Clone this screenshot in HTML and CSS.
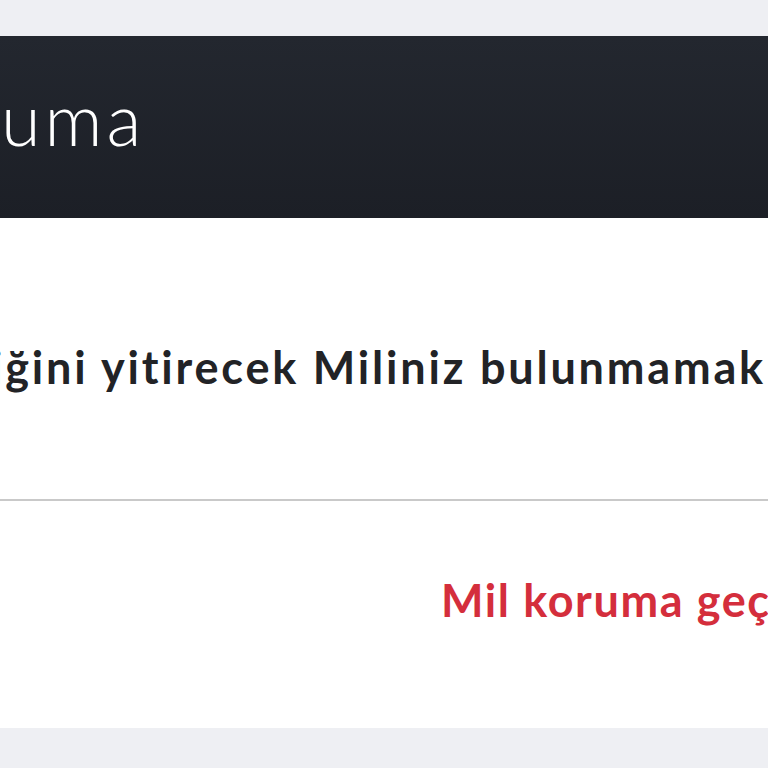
FILE: index.html
```html
<!DOCTYPE html>
<html lang="tr">
<head>
  <meta charset="UTF-8">
  <meta name="viewport" content="width=device-width, initial-scale=1.0">
  <title>Mil koruma</title>
  <link rel="stylesheet" href="styles.css">
</head>
<body>
  <div class="modal">
    <div class="modal-header">uma</div>
    <div class="modal-body">
      <p class="message">iğini yitirecek Miliniz bulunmamak</p>
    </div>
    <div class="modal-footer">
      <a class="action-link" href="#">Mil koruma geç</a>
    </div>
  </div>
</body>
</html>
```

FILE: styles.css
```css
body {
  margin: 0;
  padding: 0;
  background-color: #eeeff3;
  font-family: Lato, "Open Sans", Arial, sans-serif;
  overflow: hidden;
}

.modal {
  margin-top: 36px;
  height: 692px;
  background-color: white;
  overflow: hidden;
  white-space: nowrap;
}

.modal-header {
  height: 182px;
  box-sizing: border-box;
  padding-top: 46px;
  padding-left: 1px;
  background: linear-gradient(#23272f, #1c1f26);
  color: white;
  font-size: 72px;
  line-height: 72px;
  font-weight: 300;
  letter-spacing: 4px;
}

.modal-body {
  padding-top: 127px;
  padding-bottom: 109px;
  border-bottom: 2px solid #c9c9c9;
}

.message {
  margin: 0;
  margin-left: -9px;
  font-size: 45px;
  line-height: 45px;
  font-weight: 700;
  color: #222326;
  letter-spacing: 2.8px;
}

.modal-footer {
  padding-top: 77px;
  padding-left: 441px;
}

.action-link {
  font-size: 45px;
  line-height: 45px;
  font-weight: 700;
  color: #d42e3c;
  text-decoration: none;
  letter-spacing: 1.6px;
}
```
